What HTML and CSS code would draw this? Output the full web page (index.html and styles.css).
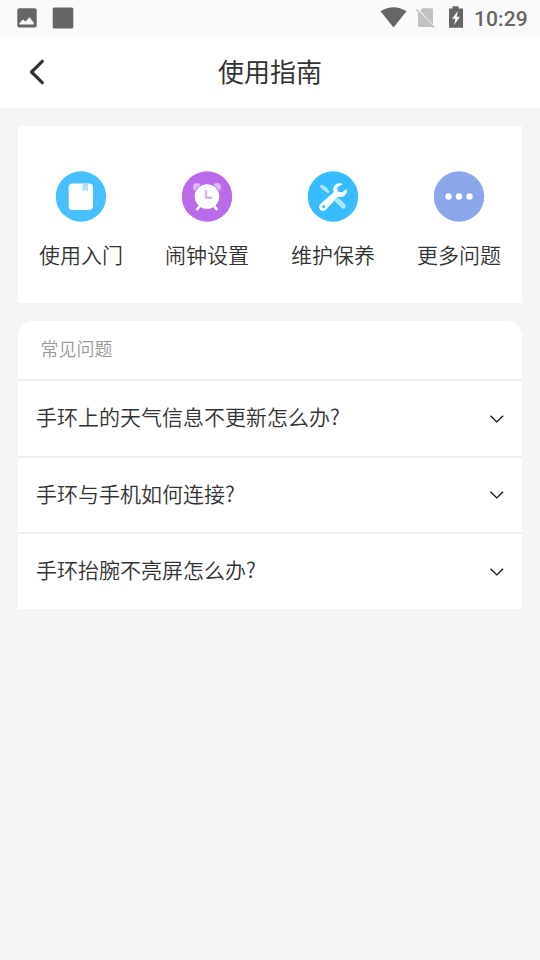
FILE: index.html
```html
<!DOCTYPE html>
<html lang="zh-CN">
<head>
<meta charset="utf-8">
<title>使用指南</title>
<link rel="stylesheet" href="styles.css">
</head>
<body>
<div class="status">
  <svg class="left-icons" width="60" height="36" viewBox="0 0 60 36"><rect x=".3" y="8.3" width="19.4" height="19.2" rx="2" fill="#666"/><path d="M2.500 24.500v-1.500l3.500-3.500 2.500 2 4-4.300 4.300 5.500v1.800z" fill="#fafafa"/><rect x="35.7" y="7.6" width="20.6" height="20.8" rx="1.5" fill="#666"/></svg>
  <svg class="right-icons" width="90" height="36" viewBox="380 0 90 36"><path d="M380.500 11.300Q393.500 3 406.500 11.300L393.500 27.500z" fill="#666"/><path d="M422.500 8.300h9.300q1.200 0 1.200 1.200v15L420 10.800zM418 11.200L433 26.700q-.3.300-.9.300h-12.900q-1.200 0-1.200-1.200z" fill="#c2c2c2"/><path d="M416.300 9.500l17.900 18" stroke="#c2c2c2" stroke-width="1.600"/><path d="M449 8.500h3.500V6.300h6v2.200h4.500v19.200h-14z" fill="#666"/><path d="M457.800 11l-5.700 7.800h3.200l-1.100 6.300 5.700-8.300h-3.200z" fill="#fafafa"/></svg>
  <span class="time">10:29</span>
</div>
<header class="header">
  <svg class="back" width="20" height="28" viewBox="0 0 20 28"><path d="M14.300 3.300L3.500 14l10.800 10.700" fill="none" stroke="#333" stroke-width="3.200" stroke-linecap="round" stroke-linejoin="round"/></svg>
  <h1>使用指南</h1>
</header>
<main>
  <nav class="topics">
    <a class="topic"><svg viewBox="0.500 0 51 51"><circle cx="25.500" cy="25.500" r="25.200" fill="#46c0ff"/><rect x="13.200" y="12.500" width="24.300" height="26.500" rx="4" fill="#fff"/><path d="M27 12.500h5.500v8l-2.750-1.700L27 20.500z" fill="#b0e3ff"/></svg><span>使用入门</span></a>
    <a class="topic"><svg viewBox="0.500 0 51 51"><circle cx="25.500" cy="25.500" r="25.200" fill="#b96bea"/><circle cx="15.500" cy="16" r="4" fill="#dfb8f6"/><circle cx="35.500" cy="16" r="4" fill="#dfb8f6"/><circle cx="25.500" cy="25.500" r="13.200" fill="#b96bea"/><path d="M18.500 35l-2.700 3.200M32.500 35l2.700 3.200" stroke="#fff" stroke-width="2.600" stroke-linecap="round"/><circle cx="25.500" cy="25.500" r="12.300" fill="#fff"/><path d="M24.500 19.800v6.900h5.300" fill="none" stroke="#ddb4f5" stroke-width="2.400" stroke-linecap="round" stroke-linejoin="round"/></svg><span>闹钟设置</span></a>
    <a class="topic"><svg viewBox="0.500 0 51 51"><circle cx="25.500" cy="25.500" r="25.200" fill="#37bcff"/><path d="M12.200 15.500l2-2 4.800 3 3.200 4.300-1.700 1.700-4.700-3.400zM27 30l3.500-3.500 7.300 7.100q1 2-.3 3.400-1.300 1.200-3.100.1z" fill="#afe4ff"/><path d="M35.400 13q-5.300-2.200-8.300 1.600-2.100 2.900-1 6.700L13.200 32.700a4 4 0 1 0 5.600 5.600L30.500 25.700q4 1.200 6.800-1.200 2.900-2.800 1.600-6.500l-4.300 3.600-4.200-1-.8-4z" fill="#fff"/><circle cx="16.100" cy="35.500" r="1.500" fill="#37bcff"/></svg><span>维护保养</span></a>
    <a class="topic"><svg viewBox="0.500 0 51 51"><circle cx="25.500" cy="25.500" r="25.200" fill="#8ca6ec"/><g fill="#fff"><circle cx="15" cy="25.500" r="3.200"/><circle cx="25.500" cy="25.500" r="3.200"/><circle cx="36" cy="25.500" r="3.200"/></g></svg><span>更多问题</span></a>
  </nav>
  <section class="faq">
    <h2>常见问题</h2>
    <div class="row"><span>手环上的天气信息不更新怎么办?</span><svg class="chevron" viewBox="0 0 14 8"><path d="M.5.800L6.800 6.900 13.100.800"/></svg></div>
    <div class="row"><span>手环与手机如何连接?</span><svg class="chevron" viewBox="0 0 14 8"><path d="M.5.800L6.800 6.900 13.100.800"/></svg></div>
    <div class="row"><span>手环抬腕不亮屏怎么办?</span><svg class="chevron" viewBox="0 0 14 8"><path d="M.5.800L6.800 6.900 13.100.800"/></svg></div>
  </section>
</main>
</body>
</html>
```
FILE: styles.css
```css
* { box-sizing: border-box; }
body {
  margin: 0;
  min-height: 960px;
  background: #f5f5f5;
  color: #333;
  font-family: "Noto Sans CJK SC", sans-serif;
  font-weight: 350;
}
svg { display: block; flex: none; }
h1, h2 { margin: 0; font-weight: 350; }
.status {
  display: flex;
  height: 36px;
  padding: 0 12px 0 17px;
  background: #fafafa;
}
.right-icons { margin-left: auto; }
.time {
  width: 54px;
  margin-left: 4px;
  font: 500 21px/38px Roboto, sans-serif;
  letter-spacing: .1px;
  color: #666;
  white-space: nowrap;
}
.header {
  display: grid;
  grid-template-columns: 72px 1fr 72px;
  align-items: center;
  height: 72px;
  background: #fff;
}
.back { margin-left: 28px; }
.header h1 {
  font-size: 26px;
  font-weight: 400;
  line-height: 70px;
  height: 72px;
  text-align: center;
}
main { padding: 18px; }
.topics {
  display: grid;
  grid-template-columns: repeat(4, 1fr);
  height: 177px;
  padding-top: 45px;
  background: #fff;
}
.topic {
  display: flex;
  flex-direction: column;
  align-items: center;
  font-size: 21px;
  line-height: 30px;
}
.topic svg { width: 51px; height: 51px; }
.topic span { margin-top: 17px; }
.faq {
  margin-top: 18px;
  background: #fff;
  border-radius: 15px 15px 0 0;
}
.faq h2 {
  height: 58px;
  padding-left: 22.500px;
  font-size: 18px;
  line-height: 54px;
  color: #999;
}
.row {
  display: flex;
  align-items: center;
  justify-content: space-between;
  height: 76.500px;
  padding: 0 18px;
  border-top: 2px solid #eee;
  font-size: 21px;
}
.row span { margin-top: -4.500px; }
.chevron { width: 14px; height: 8px; margin: 1px .5px 0 0; }
.chevron path { fill: none; stroke: #111; stroke-width: 1.300; }
```
